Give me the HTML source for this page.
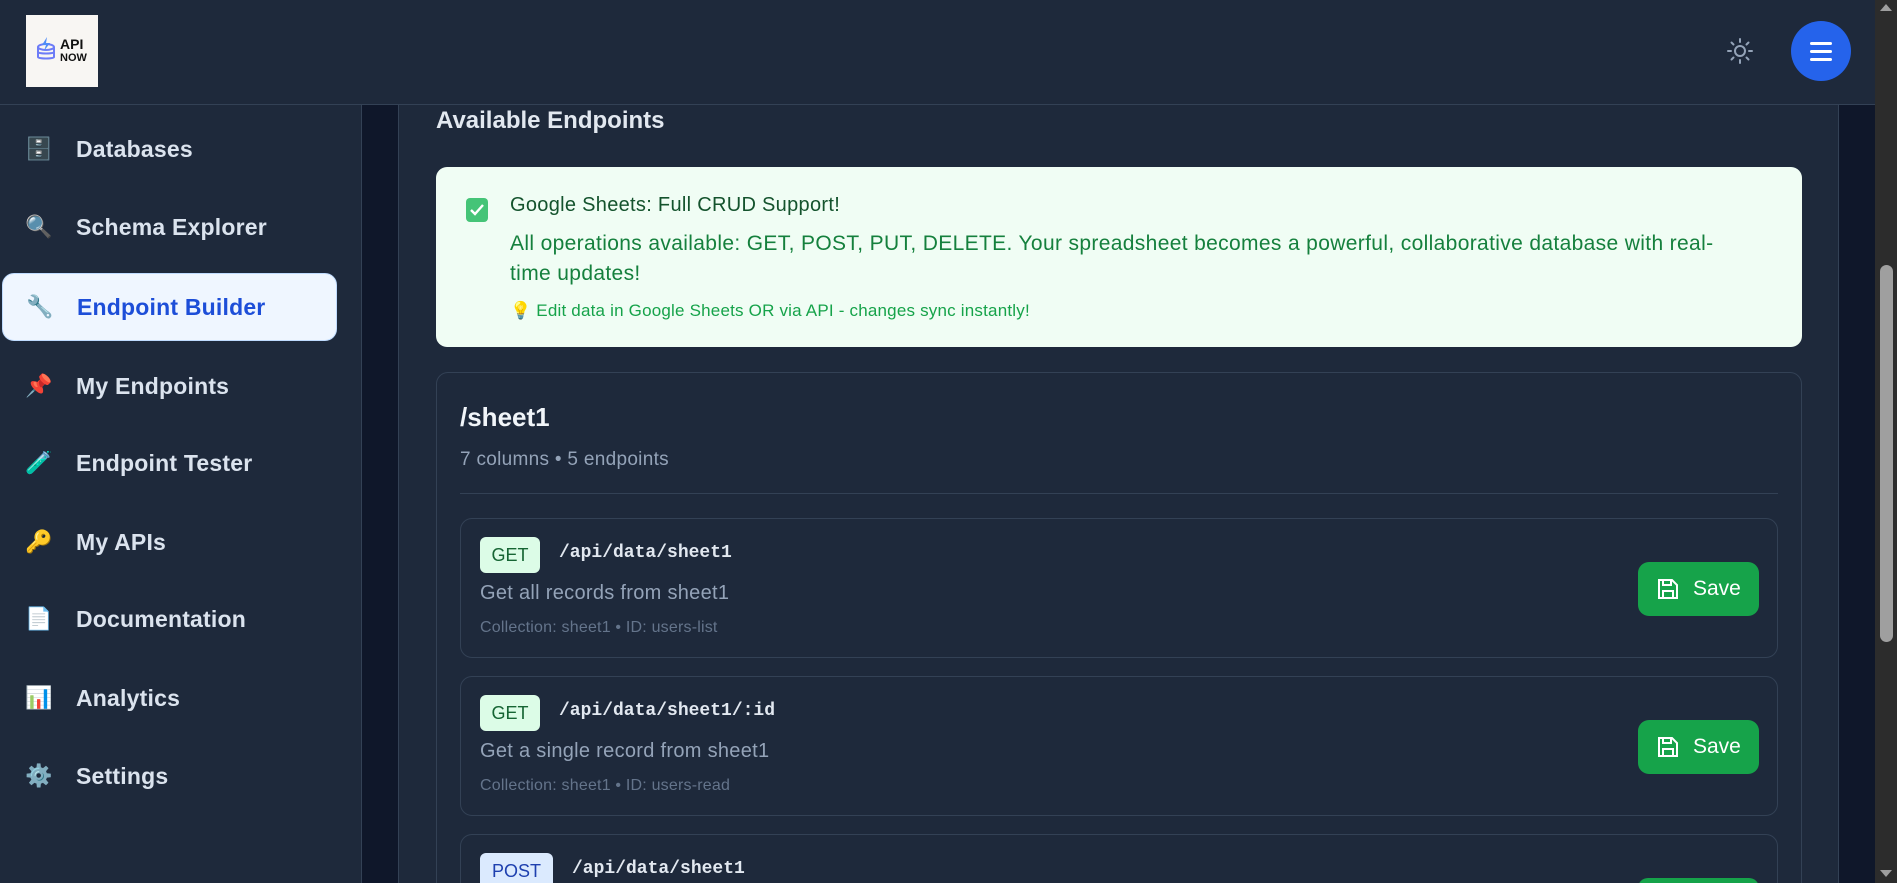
<!DOCTYPE html>
<html><head><meta charset="utf-8"><style>
*{box-sizing:border-box;margin:0;padding:0}
html{width:1897px;height:883px;overflow:hidden}
body{width:1897px;height:883px;overflow:hidden;background:#0f172a;font-family:"Liberation Sans",sans-serif;position:relative}
.abs{position:absolute}
.header{left:0;top:0;width:1875px;height:105px;background:#1e293b;border-bottom:1px solid #334155}
.logo{left:26px;top:15px;width:72px;height:72px;background:#f8f6f3}
.side{left:0;top:105px;width:362px;height:778px;background:#1e293b;border-right:1px solid #334155}
.item{position:absolute;left:0;width:362px;height:40px;display:flex;align-items:center;font-size:23px;font-weight:bold;color:#dbe3ee;letter-spacing:0.2px}
.item .ic{width:28px;margin-left:25px;margin-right:23px;font-size:22px;text-align:center}
.active{left:2px;top:168px;width:335px;height:68px;background:#eff6ff;border:1px solid #bfdbfe;border-radius:12px}
.panel{left:398px;top:105px;width:1441px;height:778px;background:#1e293b;border-left:1px solid #334155;border-right:1px solid #334155}
.mono{font-family:"Liberation Mono",monospace;font-weight:bold}
.row{position:absolute;left:460px;width:1318px;height:140px;border:1px solid #334155;border-radius:12px}
.badge{position:absolute;left:19px;top:18px;height:36px;border-radius:6px;font-size:18px;display:flex;align-items:center;justify-content:center}
.path{position:absolute;top:24px;font-size:18px;color:#e2e8f0}
.desc{position:absolute;left:19px;top:63px;font-size:20px;color:#94a3b8;letter-spacing:0.3px}
.meta{position:absolute;left:19px;top:100px;font-size:16px;color:#64748b;letter-spacing:0.2px}
.save{position:absolute;left:1177px;top:43px;width:121px;height:54px;background:#16a34a;border-radius:11px;color:#fff;font-size:21px;display:flex;align-items:center;padding-left:20px}
.save svg{margin-right:15px}
</style></head><body>
<div class="abs header"></div>
<div class="abs logo">
<svg class="abs" style="left:10px;top:22px" width="20" height="26" viewBox="0 0 20 26"><ellipse cx="10" cy="10" rx="8" ry="3" fill="none" stroke="#6d7cf7" stroke-width="2"/><path d="M2 10v10c0 2 16 2 16 0V10M2 15c0 2 16 2 16 0" fill="none" stroke="#6d7cf7" stroke-width="2"/><path d="M11 0l-5 8h4l-2 6 6-8h-4z" fill="#4f8cf7"/></svg>
<div class="abs" style="left:34px;top:23px;font-size:14px;font-weight:bold;color:#111;line-height:12px">API<br><span style="font-size:11px">NOW</span></div>
</div>
<svg class="abs" style="left:1726px;top:37px" width="28" height="28" viewBox="0 0 28 28" fill="none" stroke="#94a3b8" stroke-width="2" stroke-linecap="round"><circle cx="14" cy="14" r="5"/><path d="M14 2v3M14 23v3M2 14h3M23 14h3M5.5 5.5l2 2M20.5 20.5l2 2M5.5 22.5l2-2M20.5 7.5l2-2"/></svg>
<div class="abs" style="left:1791px;top:21px;width:60px;height:60px;border-radius:50%;background:#2563eb"></div>
<div class="abs" style="left:1810px;top:42px;width:22px;height:3px;background:#fff;border-radius:2px;box-shadow:0 8px 0 #fff,0 16px 0 #fff"></div>

<div class="abs side">
<div class="abs active"></div>
<div class="item" style="top:24px"><span class="ic">🗄️</span>Databases</div>
<div class="item" style="top:102px"><span class="ic">🔍</span>Schema Explorer</div>
<div class="item" style="top:182px;color:#1d4ed8"><span class="ic" style="margin-left:26px">🔧</span>Endpoint Builder</div>
<div class="item" style="top:261px"><span class="ic">📌</span>My Endpoints</div>
<div class="item" style="top:338px"><span class="ic">🧪</span>Endpoint Tester</div>
<div class="item" style="top:417px"><span class="ic">🔑</span>My APIs</div>
<div class="item" style="top:494px"><span class="ic">📄</span>Documentation</div>
<div class="item" style="top:573px"><span class="ic">📊</span>Analytics</div>
<div class="item" style="top:651px"><span class="ic">⚙️</span>Settings</div>
</div>

<div class="abs panel"></div>
<div class="abs" style="left:436px;top:107px;font-size:24px;font-weight:bold;color:#e2e8f0">Available Endpoints</div>
<div class="abs" style="left:436px;top:167px;width:1366px;height:180px;background:#f0fdf4;border-radius:11px">
<div class="abs" style="left:30px;top:31px;width:22px;height:24px;background:#45c477;border-radius:4px"></div>
<svg class="abs" style="left:33px;top:35px" width="16" height="16" viewBox="0 0 16 16"><path d="M2 8l4 4 8-9" fill="none" stroke="#fff" stroke-width="2.4"/></svg>
<div class="abs" style="left:74px;top:27px;font-size:20px;color:#14532d;letter-spacing:0.3px">Google Sheets: Full CRUD Support!</div>
<div class="abs" style="left:74px;top:62px;width:1240px;font-size:21px;line-height:30px;color:#15803d;letter-spacing:0.35px">All operations available: GET, POST, PUT, DELETE. Your spreadsheet becomes a powerful, collaborative database with real-time updates!</div>
<div class="abs" style="left:74px;top:134px;font-size:17px;color:#16a34a;letter-spacing:0.2px">💡 Edit data in Google Sheets OR via API - changes sync instantly!</div>
</div>

<div class="abs" style="left:436px;top:372px;width:1366px;height:530px;border:1px solid #334155;border-radius:12px"></div>
<div class="abs" style="left:460px;top:402px;font-size:26px;font-weight:bold;color:#f1f5f9">/sheet1</div>
<div class="abs" style="left:460px;top:449px;font-size:19px;color:#94a3b8;letter-spacing:0.3px">7 columns • 5 endpoints</div>
<div class="abs" style="left:460px;top:493px;width:1318px;height:1px;background:#334155"></div>

<div class="row" style="top:518px">
<div class="badge" style="width:60px;background:#dcfce7;color:#166534">GET</div>
<div class="path mono" style="left:98px">/api/data/sheet1</div>
<div class="desc">Get all records from sheet1</div>
<div class="meta">Collection: sheet1 • ID: users-list</div>
<div class="save"><svg width="20" height="20" viewBox="0 0 20 20" fill="none" stroke="#fff" stroke-width="2"><path d="M1 1h13l5 5v13H1z"/><path d="M5 1v5h8V1M5 19v-7h10v7"/></svg>Save</div>
</div>
<div class="row" style="top:676px">
<div class="badge" style="width:60px;background:#dcfce7;color:#166534">GET</div>
<div class="path mono" style="left:98px">/api/data/sheet1/:id</div>
<div class="desc">Get a single record from sheet1</div>
<div class="meta">Collection: sheet1 • ID: users-read</div>
<div class="save"><svg width="20" height="20" viewBox="0 0 20 20" fill="none" stroke="#fff" stroke-width="2"><path d="M1 1h13l5 5v13H1z"/><path d="M5 1v5h8V1M5 19v-7h10v7"/></svg>Save</div>
</div>
<div class="row" style="top:834px;height:49px;border-bottom:none;border-radius:12px 12px 0 0">
<div class="badge" style="width:73px;background:#dbeafe;color:#1e40af">POST</div>
<div class="path mono" style="left:111px">/api/data/sheet1</div>
<div class="save" style="height:10px;top:43px;border-radius:11px 11px 0 0"></div>
</div>

<div class="abs" style="left:1875px;top:0;width:22px;height:883px;background:#2c2c2c"></div>
<div class="abs" style="left:1880px;top:265px;width:13px;height:377px;background:#9f9f9f;border-radius:7px"></div>
<div class="abs" style="left:1880px;top:4px;width:0;height:0;border-left:6px solid transparent;border-right:6px solid transparent;border-bottom:7px solid #9f9f9f"></div>
<div class="abs" style="left:1880px;top:870px;width:0;height:0;border-left:6px solid transparent;border-right:6px solid transparent;border-top:7px solid #9f9f9f"></div>
</body></html>
